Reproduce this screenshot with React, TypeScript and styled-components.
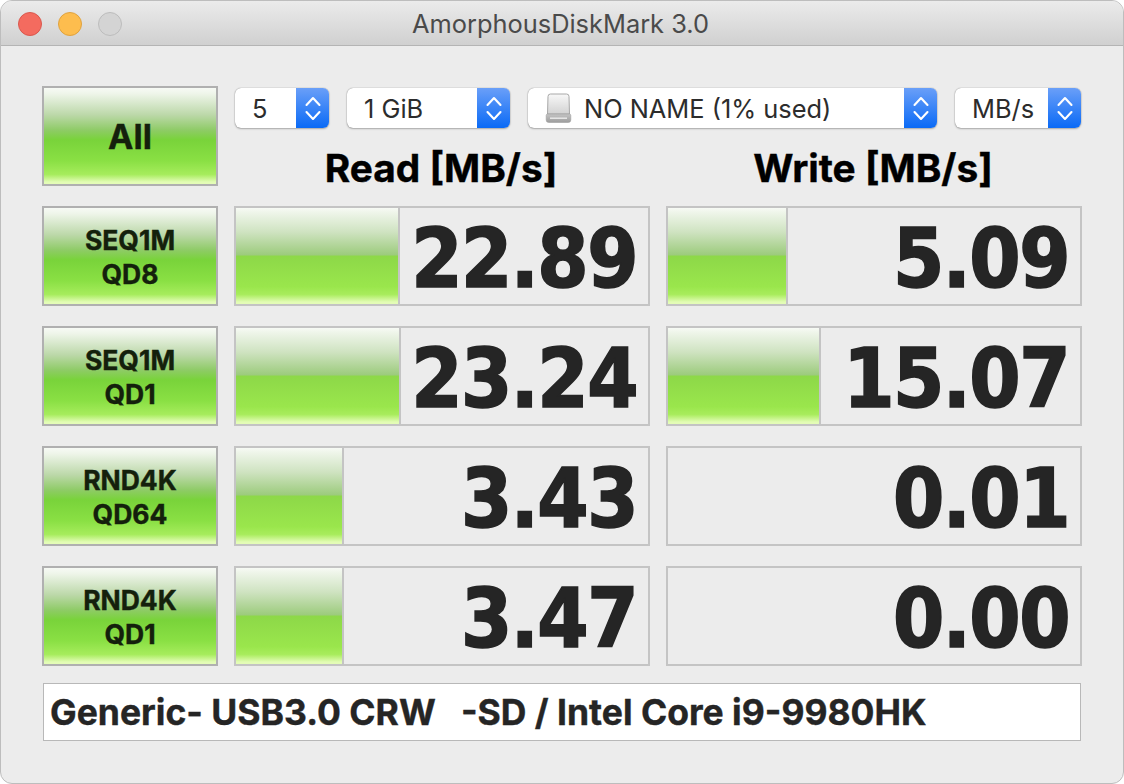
import styled, { createGlobalStyle } from "styled-components";

const tests = [
    { label: ["SEQ1M", "QD8"], read: "22.89", readBar: 164, write: "5.09", writeBar: 120 },
    { label: ["SEQ1M", "QD1"], read: "23.24", readBar: 165, write: "15.07", writeBar: 153 },
    { label: ["RND4K", "QD64"], read: "3.43", readBar: 108, write: "0.01", writeBar: 0 },
    { label: ["RND4K", "QD1"], read: "3.47", readBar: 108, write: "0.00", writeBar: 0 },
];

function Stepper() {
    return <StepBox>
        <svg width="16" height="27" viewBox="0 0 16 27" fill="none" stroke="#fff" strokeWidth="2.1" strokeLinecap="round" strokeLinejoin="round">
            <path d="M1.5 10 L8 3 L14.5 10" />
            <path d="M1.5 17 L8 24 L14.5 17" />
        </svg>
    </StepBox>;
}

function DriveIcon() {
    return <svg width="27" height="32" viewBox="0 0 27 32">
        <defs>
            <linearGradient id="body" x1="0" y1="0" x2="0" y2="1">
                <stop offset="0" stopColor="#f8f8f8" />
                <stop offset="1" stopColor="#d2d2d2" />
            </linearGradient>
            <linearGradient id="base" x1="0" y1="0" x2="0" y2="1">
                <stop offset="0" stopColor="#c4c4c4" />
                <stop offset="1" stopColor="#9c9c9c" />
            </linearGradient>
        </defs>
        <path d="M3 4.5 Q3 2 5.5 2 L21.5 2 Q24 2 24 4.5 L24.5 22 L2.5 22 Z" fill="url(#body)" stroke="#a8a8a8" />
        <path d="M2.5 22 L24.5 22 Q25.8 22 25.8 23.5 L25.8 28 Q25.8 30.5 23 30.5 L4 30.5 Q1.2 30.5 1.2 28 L1.2 23.5 Q1.2 22 2.5 22 Z" fill="url(#base)" stroke="#a0a0a0" strokeWidth="0.6" />
        <rect x="5" y="25.5" width="17" height="1.4" fill="#ececec" />
    </svg>;
}

function App() {
    return <Window>
        <GlobalStyle />
        <TitleBar>
            <Lights>
                <Light $fill="#f46b5f" $line="#d9584e" />
                <Light $fill="#fdbd4e" $line="#dfa23f" />
                <Light $fill="#d4d4d4" $line="#bcbcbc" />
            </Lights>
            <Title>AmorphousDiskMark 3.0</Title>
        </TitleBar>
        <Content>
            <Board>
                <RunButton $big>All</RunButton>
                <TopSide>
                    <Selects>
                        <Select $w={94}><SelectText $pad={17}>5</SelectText><Stepper /></Select>
                        <Select $w={163}><SelectText $pad={17}>1 GiB</SelectText><Stepper /></Select>
                        <Select $w={409}>
                            <DriveSlot><DriveIcon /></DriveSlot>
                            <SelectText $pad={12}>NO NAME (1% used)</SelectText>
                            <Stepper />
                        </Select>
                        <Select $w={126}><SelectText $pad={17}>MB/s</SelectText><Stepper /></Select>
                    </Selects>
                    <Headers>
                        <Header>Read [MB/s]</Header>
                        <Header>Write [MB/s]</Header>
                    </Headers>
                </TopSide>
                {tests.map(t => <Row key={t.label.join()}>
                    <RunButton>{t.label[0]}<br />{t.label[1]}</RunButton>
                    <Meter>
                        <Fill style={{ width: t.readBar }} />
                        <Value>{t.read}</Value>
                    </Meter>
                    <Meter>
                        {t.writeBar > 0 && <Fill style={{ width: t.writeBar }} />}
                        <Value>{t.write}</Value>
                    </Meter>
                </Row>)}
            </Board>
            <Info>Generic- USB3.0 CRW&nbsp;&nbsp;&nbsp;-SD / Intel Core i9-9980HK</Info>
        </Content>
    </Window>;
}

const GlobalStyle = createGlobalStyle`
    html, body {
        margin: 0;
        padding: 0;
        background: #fff;
    }
    * {
        box-sizing: border-box;
    }
`;

const Window = styled.div`
    width: 1124px;
    height: 784px;
    border: 1px solid #bdbdbd;
    border-radius: 12px;
    background: #ececec;
    overflow: hidden;
    font-family: Inter, "Liberation Sans", sans-serif;
`;

const TitleBar = styled.div`
    position: relative;
    display: flex;
    align-items: center;
    justify-content: center;
    height: 45px;
    border-bottom: 1px solid #b4b4b4;
    background: linear-gradient(#ebebeb, #d0d0d0);
`;

const Lights = styled.div`
    position: absolute;
    left: 17px;
    top: 11px;
    display: flex;
    gap: 16px;
`;

const Light = styled.div<{ $fill: string; $line: string }>`
    width: 24px;
    height: 24px;
    border-radius: 50%;
    background: ${p => p.$fill};
    border: 1px solid ${p => p.$line};
`;

const Title = styled.div`
    margin-left: -3px;
    font-size: 25.4px;
    color: #4a4a4a;
`;

const Content = styled.div`
    padding: 40px 41px 0 41px;
`;

const Board = styled.div`
    display: grid;
    grid-template-columns: 176px 416px 416px;
    grid-auto-rows: 100px;
    column-gap: 16px;
    row-gap: 20px;
`;

const Row = styled.div`
    display: contents;
`;

const RunButton = styled.div<{ $big?: boolean }>`
    display: flex;
    align-items: center;
    justify-content: center;
    height: 100px;
    padding-top: 2px;
    border: 2px solid #b0b0b0;
    background: linear-gradient(#f7faf5 0%, #eef5e9 6%, #bcd8a9 28%, #8ecb66 44%, #79d33a 54%, #8ae044 76%, #a6ec5c 90%, #e3fcb6 98%);
    color: #14200c;
    font-weight: 700;
    -webkit-text-stroke: 0.4px #14200c;
    font-size: ${p => p.$big ? 34 : 26.5}px;
    line-height: 34px;
    text-align: center;
`;

const TopSide = styled.div`
    grid-column: 2 / 4;
    display: flex;
    flex-direction: column;
    padding: 2px 0 0 1px;
`;

const Selects = styled.div`
    display: flex;
    gap: 18px;
`;

const Select = styled.div<{ $w: number }>`
    display: flex;
    align-items: center;
    width: ${p => p.$w}px;
    height: 40px;
    background: #fff;
    border-radius: 6px;
    box-shadow: 0 0 1px rgba(0, 0, 0, 0.5), 0 1px 2px rgba(0, 0, 0, 0.25);
    overflow: hidden;
`;

const SelectText = styled.div<{ $pad: number }>`
    flex: 1;
    padding-left: ${p => p.$pad}px;
    font-size: 25.4px;
    color: #2c2c2c;
    white-space: nowrap;
`;

const DriveSlot = styled.div`
    display: flex;
    margin-left: 17px;
`;

const StepBox = styled.div`
    display: flex;
    align-items: center;
    justify-content: center;
    width: 33px;
    height: 100%;
    background: linear-gradient(#6a9ff8, #0a6af6);
`;

const Headers = styled.div`
    display: grid;
    grid-template-columns: 416px 416px;
    column-gap: 16px;
    margin: 0 0 0 -2px;
`;

const Header = styled.div`
    text-align: center;
    font-size: 38.8px;
    font-weight: 700;
    -webkit-text-stroke: 0.4px #000;
    line-height: 40px;
    padding-top: 20px;
    color: #000;
`;

const Meter = styled.div`
    display: flex;
    position: relative;
    height: 100px;
    border: 2px solid #c4c4c4;
    background: #ececec;
`;

const Fill = styled.div`
    position: absolute;
    left: 0;
    top: 0;
    bottom: 0;
    border-right: 2px solid #c4c4c4;
    background: linear-gradient(#f7faf5 0%, #eef5e9 5%, #cfe3c1 25%, #9ccb7c 49%, #8dd848 50%, #9ae64c 82%, #a8ec5c 90%, #e3fcb6 98%);
`;

const Value = styled.div`
    position: relative;
    flex: 1;
    padding-top: 3px;
    padding-right: 11px;
    text-align: right;
    font-family: "DejaVu Sans Condensed", "DejaVu Sans", sans-serif;
    font-stretch: condensed;
    font-size: 82px;
    font-weight: 700;
    letter-spacing: -1.5px;
    -webkit-text-stroke: 1.6px #252525;
    line-height: 96px;
    color: #252525;
`;

const Info = styled.div`
    display: flex;
    align-items: center;
    margin: 17px 0 0 1px;
    width: 1038px;
    height: 58px;
    padding-left: 6px;
    border: 1px solid #b8b8b8;
    background: #fff;
    font-size: 35.5px;
    font-weight: 700;
    -webkit-text-stroke: 0.4px #252525;
    color: #252525;
    white-space: pre;
`;

export default App;
